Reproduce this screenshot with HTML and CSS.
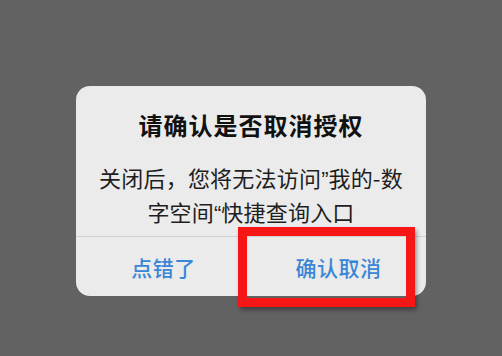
FILE: index.html
```html
<!DOCTYPE html>
<html lang="zh-CN">
<head>
    <meta charset="UTF-8">
    <meta name="viewport" content="width=device-width, initial-scale=1.0">
    <title>取消授权</title>
    <link rel="stylesheet" href="styles.css">
</head>
<body>
    <div class="dialog">
        <div class="dialog-body">
            <h2 class="dialog-title">请确认是否取消授权</h2>
            <p class="dialog-text">关闭后，您将无法访问<span class="quote">”</span>我的-数<br>字空间<span class="quote">“</span>快捷查询入口</p>
        </div>
        <div class="dialog-actions">
            <button class="action-btn">点错了</button>
            <button class="action-btn">确认取消</button>
        </div>
        <div class="highlight-box"></div>
    </div>
</body>
</html>
```

FILE: styles.css
```css
* {
    margin: 0;
    padding: 0;
    box-sizing: border-box;
    font-family: "Noto Sans CJK SC", "Noto Sans", sans-serif;
}

body {
    height: 356px;
    background-color: #626262;
    display: flex;
    justify-content: center;
    align-items: flex-start;
    overflow: hidden;
}

.dialog {
    position: relative;
    width: 350px;
    margin-top: 86px;
    background-color: #ebebeb;
    border-radius: 14px;
}

.dialog-body {
    padding: 21px 10px 8px;
    text-align: center;
}

.dialog-title {
    font-size: 24px;
    line-height: 36px;
    font-weight: bold;
    letter-spacing: 1px;
    color: #111;
    margin-bottom: 17px;
}

.dialog-text {
    font-size: 22px;
    line-height: 34px;
    letter-spacing: 0.2px;
    color: #1e1e1e;
}

.quote {
    font-family: "Liberation Sans", sans-serif;
    letter-spacing: 0;
    line-height: 1;
}

.dialog-actions {
    display: flex;
    height: 60px;
    border-top: 1px solid #d2d2d2;
}

.action-btn {
    flex: 1;
    background: none;
    border: none;
    font-size: 21px;
    font-weight: 500;
    letter-spacing: 0.5px;
    color: #3a86d6;
    cursor: pointer;
}

.highlight-box {
    position: absolute;
    left: 162px;
    top: 141px;
    width: 177px;
    height: 80px;
    border: 9px solid #f71616;
    box-shadow: 2px 3px 4px rgba(0, 0, 0, 0.35);
}
```
